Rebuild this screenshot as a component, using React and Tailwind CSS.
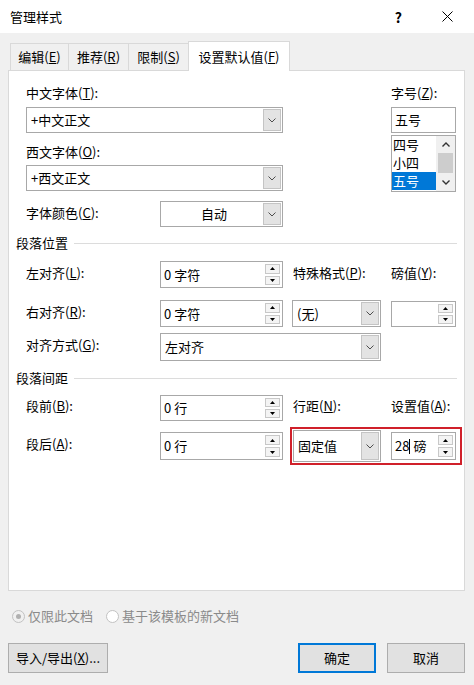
import React from "react";

const Chevron = () => (
  <svg width="8" height="5" viewBox="0 0 8 5">
    <path d="M0.5 0.5 L4 4 L7.5 0.5" fill="none" stroke="#4d4d4d" strokeWidth="1" />
  </svg>
);

const Tri = ({ down }) => (
  <svg width="5" height="3" viewBox="0 0 5 3">
    <path d={down ? "M0 0 L5 0 L2.5 3Z" : "M0 3 L5 3 L2.5 0Z"} fill="#000" />
  </svg>
);

const Combo = ({ children, center, className = "" }) => (
  <div className={`flex h-full border border-[#a8a8a8] bg-white ${className}`}>
    <div className={`flex flex-1 items-center pl-[4px] ${center ? "justify-center" : ""}`}>{children}</div>
    <div className="my-px mr-px flex w-[18px] items-center justify-center border border-[#c4c4c4] bg-[#e3e3e3]">
      <Chevron />
    </div>
  </div>
);

const SpinBtns = () => (
  <div className="flex flex-col gap-[2px] py-[2px] pr-[2px]">
    <div className="flex flex-1 w-[15px] items-center justify-center border border-[#c8c8c8] bg-[#f4f4f4]">
      <Tri />
    </div>
    <div className="flex flex-1 w-[15px] items-center justify-center border border-[#c8c8c8] bg-[#f4f4f4]">
      <Tri down />
    </div>
  </div>
);

const SpinBox = ({ children }) => (
  <div className="flex h-full border border-[#a8a8a8] bg-white">
    <div className="flex flex-1 items-center pl-[3px]">{children}</div>
    <SpinBtns />
  </div>
);

const Label = ({ children, className = "" }) => <span className={`pb-[4px] ${className}`}>{children}</span>;

const Section = ({ children }) => (
  <div className="mx-[7px] flex h-[16px] items-center">
    <span>{children}</span>
    <div className="ml-[6px] h-px flex-1 bg-[#dcdcdc]" />
  </div>
);

const Tab = ({ children, active, w }) => (
  <div
    className={`-ml-px flex items-center justify-center border border-b-0 border-[#d9d9d9] ${w} ${
      active ? "relative z-10 h-[30px] bg-white" : "mb-px h-[27px] bg-[#f0f0f0]"
    }`}
  >
    {children}
  </div>
);

export default function App() {
  return (
    <div className="h-[685px] w-[474px] overflow-hidden bg-[#f0f0f0] text-[13px] leading-[16px] text-black font-['Microsoft_YaHei_UI','Noto_Sans_CJK_SC',sans-serif]">
      {/* title bar */}
      <div className="flex h-[33px] items-center bg-white pl-[10px]">
        <span className="flex-1">管理样式</span>
        <span className="mr-[40px] text-[14px] font-bold">?</span>
        <svg width="11" height="11" viewBox="0 0 11 11" className="mr-[21px]">
          <path d="M0.5 0.5 L10.5 10.5 M10.5 0.5 L0.5 10.5" stroke="#000" strokeWidth="1" />
        </svg>
      </div>

      {/* tabs */}
      <div className="ml-[11px] mt-[8px] flex h-[30px] items-end">
        <Tab w="w-[59px]">
          编辑(<u>E</u>)
        </Tab>
        <Tab w="w-[61px]">
          推荐(<u>R</u>)
        </Tab>
        <Tab w="w-[61px]">
          限制(<u>S</u>)
        </Tab>
        <Tab w="w-[102px]" active>
          设置默认值(<u>F</u>)
        </Tab>
      </div>

      {/* panel */}
      <div className="-mt-px ml-[8px] h-[521px] w-[457px] border border-[#d9d9d9] bg-white">
        {/* font section */}
        <div className="flex pl-[17px] pt-[14px]">
          <div className="flex w-[257px] flex-col">
            <span>
              中文字体(<u>T</u>):
            </span>
            <div className="mt-[6px] h-[26px]">
              <Combo>+中文正文</Combo>
            </div>
            <span className="mt-[11px]">
              西文字体(<u>O</u>):
            </span>
            <div className="mt-[5px] h-[26px]">
              <Combo>+西文正文</Combo>
            </div>
            <div className="mt-[10px] flex h-[26px] items-center">
              <span className="w-[134px] pb-[3px]">
                字体颜色(<u>C</u>):
              </span>
              <Combo center className="flex-1">
                自动
              </Combo>
            </div>
          </div>
          <div className="ml-[108px] flex w-[65px] flex-col">
            <span>
              字号(<u>Z</u>):
            </span>
            <div className="mt-[6px] flex h-[26px] items-center border border-[#a8a8a8] bg-white pl-[3px]">五号</div>
            <div className="mt-[2px] flex h-[57px] border border-[#a8a8a8] bg-white">
              <div className="flex flex-1 flex-col">
                <div className="flex h-[18px] items-center pl-[1px]">四号</div>
                <div className="flex h-[18px] items-center pl-[1px]">小四</div>
                <div className="flex h-[18px] items-center bg-[#0078d7] pl-[1px] text-white">五号</div>
              </div>
              <div className="flex w-[19px] flex-col items-center bg-[#f0f0f0]">
                <div className="flex h-[17px] items-center">
                  <svg width="8" height="5" viewBox="0 0 8 5">
                    <path d="M0.5 4.5 L4 1 L7.5 4.5" fill="none" stroke="#333" strokeWidth="1.4" />
                  </svg>
                </div>
                <div className="h-[20px] w-[15px] bg-[#cdcdcd]" />
                <div className="flex flex-1 items-center">
                  <svg width="8" height="5" viewBox="0 0 8 5">
                    <path d="M0.5 0.5 L4 4 L7.5 0.5" fill="none" stroke="#333" strokeWidth="1.4" />
                  </svg>
                </div>
              </div>
            </div>
          </div>
        </div>

        {/* paragraph position */}
        <div className="mt-[8px]">
          <Section>段落位置</Section>
        </div>
        <div className="mt-[10px] flex h-[27px] items-center pl-[17px]">
          <Label className="w-[134px]">
            左对齐(<u>L</u>):
          </Label>
          <div className="h-full w-[123px]">
            <SpinBox>0 字符</SpinBox>
          </div>
          <Label className="ml-[10px] w-[98px]">
            特殊格式(<u>P</u>):
          </Label>
          <Label>
            磅值(<u>Y</u>):
          </Label>
        </div>
        <div className="mt-[12px] flex h-[27px] items-center pl-[17px]">
          <Label className="w-[134px]">
            右对齐(<u>R</u>):
          </Label>
          <div className="h-full w-[123px]">
            <SpinBox>0 字符</SpinBox>
          </div>
          <div className="ml-[9px] h-full w-[89px]">
            <Combo>(无)</Combo>
          </div>
          <div className="ml-[10px] h-[26px] w-[65px]">
            <SpinBox />
          </div>
        </div>
        <div className="mt-[6px] flex h-[28px] items-center pl-[17px]">
          <Label className="w-[134px]">
            对齐方式(<u>G</u>):
          </Label>
          <div className="h-full w-[221px]">
            <Combo>左对齐</Combo>
          </div>
        </div>

        {/* paragraph spacing */}
        <div className="mt-[9px]">
          <Section>段落间距</Section>
        </div>
        <div className="mt-[9px] flex h-[26px] items-center pl-[17px]">
          <Label className="w-[134px]">
            段前(<u>B</u>):
          </Label>
          <div className="h-full w-[123px]">
            <SpinBox>0 行</SpinBox>
          </div>
          <Label className="ml-[10px] w-[98px]">
            行距(<u>N</u>):
          </Label>
          <Label>
            设置值(<u>A</u>):
          </Label>
        </div>
        <div className="relative mt-[11px] flex h-[28px] items-center pl-[17px]">
          <Label className="w-[134px]">
            段后(<u>A</u>):
          </Label>
          <div className="h-full w-[123px]">
            <SpinBox>0 行</SpinBox>
          </div>
          <div className="ml-[10px] h-[32px] w-[88px]">
            <Combo>固定值</Combo>
          </div>
          <div className="ml-[10px] h-[28px] w-[65px]">
            <SpinBox>
              <span>28</span>
              <span className="inline-block h-[15px] w-px bg-black" />
              <span className="ml-[3px]">磅</span>
            </SpinBox>
          </div>
          <div className="pointer-events-none absolute left-[281px] top-[-5px] h-[38px] w-[172px] border-2 border-[#d0202a]" />
        </div>
      </div>

      {/* radios */}
      <div className="ml-[12px] mt-[17px] flex h-[16px] items-center text-[#8a8a8a]">
        <span className="flex h-[13px] w-[13px] items-center justify-center rounded-full border border-[#c2c2c2] bg-[#f0f0f0]">
          <span className="h-[5px] w-[5px] rounded-full bg-[#b0b0b0]" />
        </span>
        <span className="ml-[3px]">仅限此文档</span>
        <span className="ml-[13px] h-[13px] w-[13px] rounded-full border border-[#c2c2c2] bg-white" />
        <span className="ml-[3px]">基于该模板的新文档</span>
      </div>

      {/* buttons */}
      <div className="mt-[19px] flex h-[30px] pl-[8px]">
        <div className="flex w-[100px] items-center justify-center border border-[#adadad] bg-[#e1e1e1]">
          导入/导出(<u>X</u>)...
        </div>
        <div className="ml-[190px] flex w-[78px] items-center justify-center border-2 border-[#0078d7] bg-[#e1e1e1]">
          确定
        </div>
        <div className="ml-[11px] flex w-[78px] items-center justify-center border border-[#adadad] bg-[#e1e1e1]">
          取消
        </div>
      </div>
    </div>
  );
}
